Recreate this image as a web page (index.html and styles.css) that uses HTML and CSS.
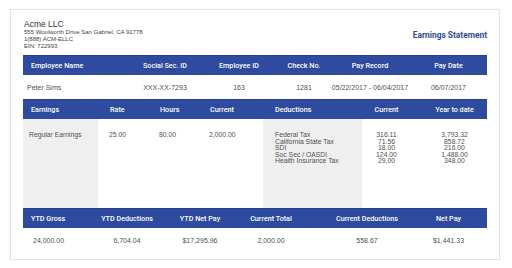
FILE: index.html
```html
<!DOCTYPE html>
<html lang="en">
<head>
    <meta charset="UTF-8">
    <meta name="viewport" content="width=device-width, initial-scale=1.0">
    <title>Earnings Statement</title>
    <link rel="stylesheet" href="styles.css">
</head>
<body>
    <div class="stub">
        <div class="stub-top">
            <div class="company">
                <div class="company-name">Acme LLC</div>
                <div class="company-line">555 Woolworth Drive San Gabriel, CA 91778</div>
                <div class="company-line">1(888) ACM-ELLC</div>
                <div class="company-line">EIN: 722993</div>
            </div>
            <div class="doc-title">Earnings Statement</div>
        </div>

        <div class="grid info">
            <div class="head first">Employee Name</div>
            <div class="head">Social Sec. ID</div>
            <div class="head">Employee ID</div>
            <div class="head">Check No.</div>
            <div class="head">Pay Record</div>
            <div class="head">Pay Date</div>
            <div class="val first">Peter Sims</div>
            <div class="val">XXX-XX-7293</div>
            <div class="val">163</div>
            <div class="val">1281</div>
            <div class="val">05/22/2017 - 06/04/2017</div>
            <div class="val">06/07/2017</div>
        </div>

        <div class="grid earn">
            <div class="head first">Earnings</div>
            <div class="head left">Rate</div>
            <div class="head left">Hours</div>
            <div class="head left">Current</div>
            <div class="head ded">Deductions</div>
            <div class="head">Current</div>
            <div class="head ytd">Year to date</div>

            <div class="body shaded first">
                <div>Regular Earnings</div>
            </div>
            <div class="body left">
                <div>25.00</div>
            </div>
            <div class="body left">
                <div>80.00</div>
            </div>
            <div class="body left">
                <div>2,000.00</div>
            </div>
            <div class="body shaded ded">
                <div>Federal Tax</div>
                <div>California State Tax</div>
                <div>SDI</div>
                <div>Soc Sec / OASDI</div>
                <div>Health Insurance Tax</div>
            </div>
            <div class="body num">
                <div>316.11</div>
                <div>71.56</div>
                <div>18.00</div>
                <div>124.00</div>
                <div>29.00</div>
            </div>
            <div class="body num ytd">
                <div>3,793.32</div>
                <div>858.72</div>
                <div>216.00</div>
                <div>1,488.00</div>
                <div>348.00</div>
            </div>
        </div>

        <div class="grid totals">
            <div class="head first">YTD Gross</div>
            <div class="head">YTD Deductions</div>
            <div class="head">YTD Net Pay</div>
            <div class="head total">Current Total</div>
            <div class="head">Current Deductions</div>
            <div class="head">Net Pay</div>
            <div class="val first wide">24,000.00</div>
            <div class="val">6,704.04</div>
            <div class="val">$17,295.96</div>
            <div class="val total">2,000.00</div>
            <div class="val">558.67</div>
            <div class="val">$1,441.33</div>
        </div>
    </div>
</body>
</html>
```

FILE: styles.css
```css
body {
    margin: 0;
    background: #fff;
    font-family: 'Liberation Sans', Arial, sans-serif;
    color: #505050;
}
.stub {
    width: 464px;
    margin: 9px 0 0 10px;
    padding: 9px 12px 7px 12px;
    border: 1px solid #e4e4e4;
    box-shadow: 0 0 2px rgba(0, 0, 0, 0.06);
    background: #fff;
}
.stub-top {
    display: flex;
    justify-content: space-between;
    align-items: center;
    margin-bottom: 5px;
}
.company {
    padding-left: 1px;
}
.company-name {
    font-size: 8.5px;
    line-height: 10px;
    color: #333;
}
.company-line {
    font-size: 6px;
    line-height: 7px;
    color: #444;
}
.doc-title {
    font-family: Roboto, 'Liberation Sans', sans-serif;
    font-weight: 700;
    font-size: 8.4px;
    color: #2e4a9c;
}
.grid {
    display: grid;
    font-size: 7px;
}
.head {
    height: 20px;
    display: flex;
    align-items: center;
    justify-content: center;
    background: #2f4b9f;
    border-top: 1px solid #24408f;
    box-sizing: border-box;
    color: #fff;
    font-family: Roboto, 'Liberation Sans', sans-serif;
    font-weight: 500;
    font-size: 7.2px;
    white-space: nowrap;
}
.head.first {
    justify-content: flex-start;
    padding-left: 8px;
}
.val {
    height: 24px;
    display: flex;
    align-items: center;
    justify-content: center;
    white-space: nowrap;
}
.val.first {
    justify-content: flex-start;
    padding-left: 4px;
}
.val.wide {
    padding-left: 10px;
}
.info {
    grid-template-columns: 107px 70px 78px 52px 80px 77px;
}
.earn {
    grid-template-columns: 75px 50px 50px 65px 99px 49px 76px;
}
.earn .left {
    justify-content: flex-start;
    padding-left: 11px;
}
.earn .head.left {
    padding-left: 12px;
}
.earn .ded {
    justify-content: flex-start;
    padding-left: 12px;
}
.earn .ytd {
    padding-left: 11px;
}
.body {
    height: 89px;
    box-sizing: border-box;
    padding-top: 13px;
    font-size: 6.8px;
    line-height: 6.5px;
    white-space: nowrap;
}
.body.first {
    padding-left: 6px;
}
.body.num {
    text-align: center;
}
.shaded {
    background: #efefef;
}
.totals {
    grid-template-columns: 67px 74px 72px 88px 86px 77px;
}
.totals .total {
    padding-right: 18px;
}
```
